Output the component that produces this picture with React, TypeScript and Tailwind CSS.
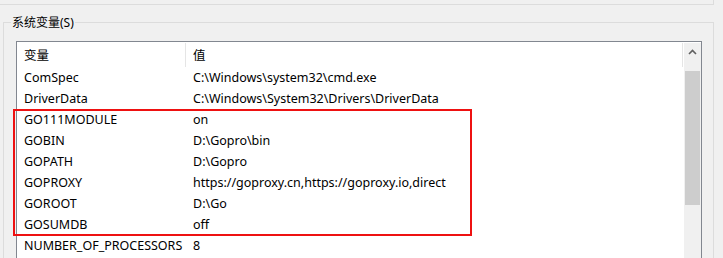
import React from "react";

type EnvVar = { name: string; value: string };

const rows: EnvVar[] = [
  { name: "ComSpec", value: "C:\\Windows\\system32\\cmd.exe" },
  { name: "DriverData", value: "C:\\Windows\\System32\\Drivers\\DriverData" },
  { name: "GO111MODULE", value: "on" },
  { name: "GOBIN", value: "D:\\Gopro\\bin" },
  { name: "GOPATH", value: "D:\\Gopro" },
  { name: "GOPROXY", value: "https://goproxy.cn,https://goproxy.io,direct" },
  { name: "GOROOT", value: "D:\\Go" },
  { name: "GOSUMDB", value: "off" },
  { name: "NUMBER_OF_PROCESSORS", value: "8" },
];

export default function App() {
  return (
    <div
      className="relative w-[723px] h-[258px] overflow-hidden bg-[#f0f0f0] text-black text-[12.5px]"
      style={{ fontFamily: "'Noto Sans', 'Noto Sans CJK SC', sans-serif" }}
    >
      {/* bottom edge of the group above */}
      <div className="h-[5px] w-[714px] border-b border-r border-[#dcdcdc]" />

      {/* system variables group */}
      <fieldset className="ml-[3px] mt-[9px] w-[711px] border border-[#dcdcdc] pl-[7px] pr-0 pb-0">
        <legend className="px-px pt-px leading-[16px] text-[12px]">系统变量(S)</legend>

        <div className="ml-[5px] mt-[10px] w-[686px] h-[260px] border border-[#828790] bg-white flex">
          {/* list */}
          <div className="flex-1 flex flex-col">
            <div className="mt-px h-[24px] flex w-[666px]">
              <div className="w-[169px] h-full pl-[7px] pt-[2px] flex items-center border-r border-[#e5e5e5]">
                变量
              </div>
              <div className="flex-1 h-full pl-[7px] pt-[2px] flex items-center border-r border-[#e5e5e5]">
                值
              </div>
            </div>
            {rows.map((row) => (
              <div key={row.name} className="h-[21px] pt-[2px] flex items-center whitespace-nowrap">
                <div className="w-[169px] pl-[7px]">{row.name}</div>
                <div className="pl-[7px]">{row.value}</div>
              </div>
            ))}
          </div>

          {/* scrollbar */}
          <div className="mt-px w-[17px] bg-[#f0f0f0] flex flex-col">
            <div className="h-[17px] flex items-center justify-center">
              <svg width="9" height="6" viewBox="0 0 9 6" className="text-[#606060]">
                <path d="M1 5 L4.5 1.5 L8 5" fill="none" stroke="currentColor" strokeWidth="1.6" />
              </svg>
            </div>
            <div className="mt-[11px] mx-px h-[134px] bg-[#cdcdcd]" />
          </div>
        </div>
      </fieldset>

      {/* red annotation box */}
      <div className="absolute left-[13px] top-[109px] w-[459px] h-[127px] border-2 border-[#ee1111]" />
    </div>
  );
}
